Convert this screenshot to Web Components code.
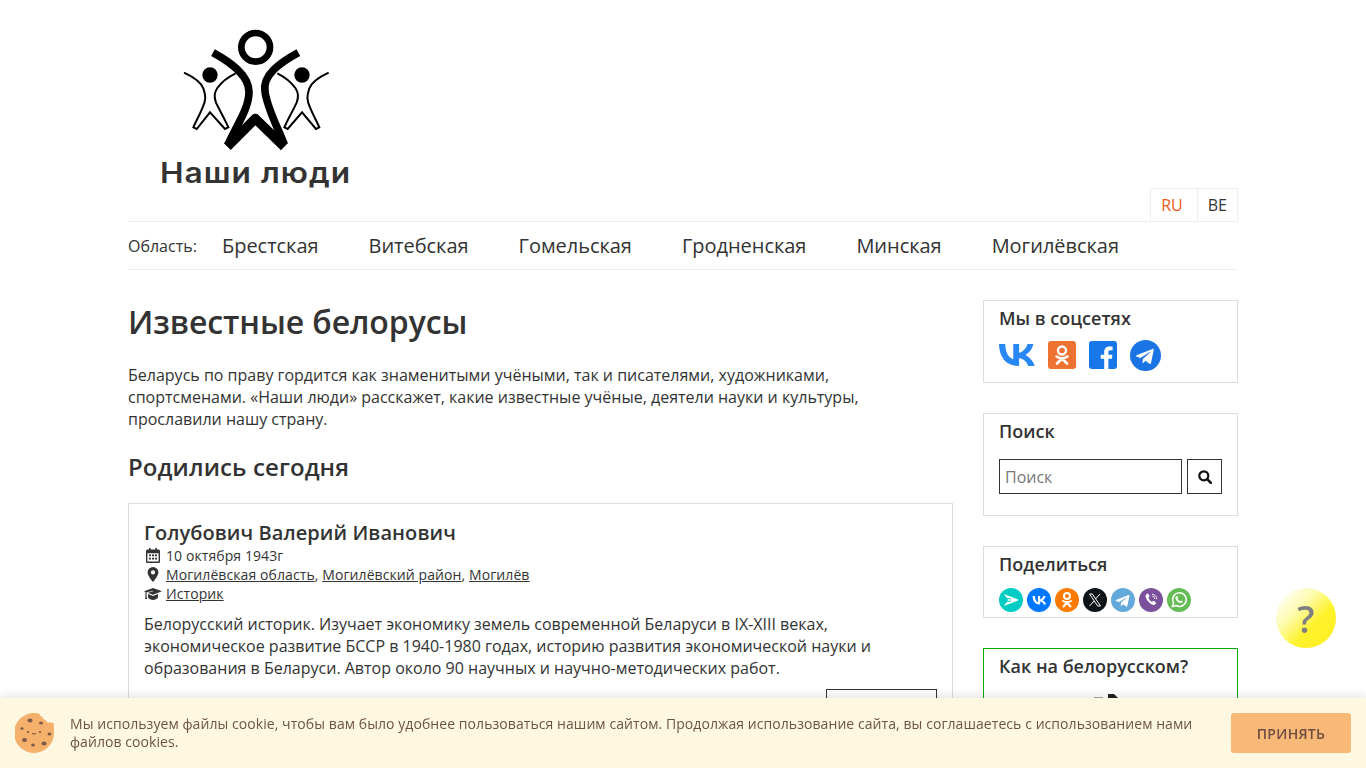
<!DOCTYPE html>
<html lang="ru">
<head>
<meta charset="utf-8">
<title>Наши люди</title>
<style>
  html, body { margin: 0; height: 768px; overflow: hidden; background: #fff; }
  body { font-family: "Open Sans", "Noto Sans", sans-serif; color: #333; font-size: 16px; }
  .page { width: 1110px; margin: 0 auto; }
  .columns { display: flex; justify-content: space-between; padding-top: 30px; }
</style>
</head>
<body>
<div class="page">
  <site-header></site-header>
  <region-nav></region-nav>
  <div class="columns">
    <main-column>
      <person-card name="Голубович Валерий Иванович" date="10 октября 1943г" job="Историк">
        Белорусский историк. Изучает экономику земель современной Беларуси в IX-XIII веках, экономическое развитие БССР в 1940-1980 годах, историю развития экономической науки и образования в Беларуси. Автор около 90 научных и научно-методических работ.
      </person-card>
    </main-column>
    <side-column></side-column>
  </div>
</div>
<help-bubble></help-bubble>
<cookie-bar></cookie-bar>

<script>
// маленькие иконки, все в одном месте
const ICONS = {
  calendar: '<svg viewBox="0 0 14 15" width="14" height="15"><path fill="#333" d="M3 0h1.600v1.600h4.800V0H11v1.600h1.400c.9 0 1.600.7 1.600 1.600v10.200c0 .9-.7 1.600-1.600 1.600H1.600C.7 15 0 14.300 0 13.400V3.200c0-.9.7-1.600 1.600-1.600H3zM1.400 5.200v8c0 .2.100.4.400.4h10.400c.3 0 .4-.2.400-.4v-8z"/><path fill="#333" d="M3 6.500h2v1.800H3zM6 6.500h2v1.800H6zM9 6.500h2v1.800H9zM3 9.800h2v1.800H3zM6 9.800h2v1.800H6zM9 9.800h2v1.800H9z"/></svg>',
  marker: '<svg viewBox="0 0 12 15" width="12" height="15"><path fill="#333" fill-rule="evenodd" d="M6 0a5.400 5.400 0 0 1 5.400 5.400C11.400 8.500 7.500 13 6 15 4.500 13 .6 8.500.6 5.400A5.400 5.400 0 0 1 6 0zm0 3.300a2.100 2.100 0 1 0 0 4.200 2.100 2.100 0 0 0 0-4.200z"/></svg>',
  cap: '<svg viewBox="0 0 18 12" width="18" height="12"><path fill="#333" d="M9 0l9 3.300L9 6.700 3.600 4.700 9 3.600l-.2-.7-6.200 1.300v4.300l.5 2.600H.9l.6-2.600V3.900L0 3.300z"/><path fill="#333" d="M4 6l5 1.900L14 6v3.500C13 11 11 12 9 12s-4-1-5-2.500z"/></svg>',
  search: '<svg viewBox="0 0 14 14" width="14" height="14"><circle cx="5.800" cy="5.800" r="4.500" fill="none" stroke="#111" stroke-width="2.200"/><path d="M9.200 9.200l3.600 3.600" stroke="#111" stroke-width="2.600" stroke-linecap="round"/></svg>'
};

function define(name, html) {
  customElements.define(name, class extends HTMLElement {
    constructor() {
      super();
      this.attachShadow({ mode: 'open' });
      this.shadowRoot.innerHTML = typeof html === 'function' ? html(this) : html;
    }
  });
}

define('site-logo', `
  <style>
    :host { display: block; width: 255px; height: 188px; position: relative; }
    svg { position: absolute; left: 42px; top: 20px; }
    .name {
      position: absolute; left: 0; right: 0; top: 150px; text-align: center;
      font: 600 28px/46px Inter, sans-serif; color: #333; letter-spacing: .9px;
      transform: scaleX(1.13);
    }
  </style>
  <svg width="170" height="135" viewBox="0 0 510 405">
    <circle cx="257" cy="82" r="43" fill="none" stroke="#000" stroke-width="20"/>
    <g fill="none" stroke="#000" stroke-width="23">
      <path d="M129 98C180 126 236 164 237 215C238 265 197 320 174 374"/>
      <path d="M385 98C334 126 276 164 285 215C292 265 322 320 343 374"/>
      <path d="M172 380L256 296L343 380" stroke-width="29" stroke-linejoin="round"/>
    </g>
    <g fill="none" stroke="#000" stroke-width="6">
      <circle cx="120" cy="165" r="23" fill="#000" stroke="none"/>
      <path d="M42 158C68 170 92 186 100 205C108 228 108 240 98 262C90 282 78 304 70 322L80 327L120 277L165 327L175 322C164 296 148 270 138 248C132 232 132 218 142 204C152 190 172 172 197 160"/>
    </g>
    <g fill="none" stroke="#000" stroke-width="6">
      <circle cx="396" cy="165" r="23" fill="#000" stroke="none"/>
      <path d="M476 158C450 170 426 186 418 205C410 228 410 240 420 262C428 282 440 304 448 322L438 327L396 277L353 327L343 322C354 296 370 270 380 248C386 232 386 218 376 204C366 190 346 172 322 160"/>
    </g>
  </svg>
  <div class="name">Наши люди</div>
`);

define('site-header', `
  <style>
    :host { display: flex; justify-content: space-between; align-items: flex-end; height: 221px; }
    .lang { display: flex; margin-bottom: -1px; }
    .lang span { padding: 0 10px; height: 32px; line-height: 32px; border: 1px solid #eee; font-size: 16px; }
    .lang span + span { border-left: 0; }
    .lang .on { color: #f0581a; padding-right: 14px; }
    site-logo { align-self: flex-start; }
  </style>
  <site-logo></site-logo>
  <div class="lang"><span class="on">RU</span><span>BE</span></div>
`);

define('region-nav', `
  <style>
    :host { display: flex; align-items: center; height: 47px; border-top: 1px solid #eee; border-bottom: 1px solid #eee; }
    .label { font-size: 16px; width: 94px; }
    a { font-size: 20px; color: #333; margin-right: 50px; text-decoration: none; letter-spacing: -.03px; }
  </style>
  <span class="label">Область:</span>
  <a>Брестская</a><a>Витебская</a><a>Гомельская</a><a>Гродненская</a><a>Минская</a><a>Могилёвская</a>
`);

define('main-column', `
  <style>
    :host { display: block; width: 825px; }
    h1 { font-size: 32px; font-weight: 600; line-height: 44px; margin: 0 0 20px; letter-spacing: -.1px; }
    p { margin: 0; width: 760px; line-height: 22px; }
    h2 { font-size: 24px; font-weight: 600; line-height: 32px; margin: 21px 0 20px; letter-spacing: .1px; }
  </style>
  <h1>Известные белорусы</h1>
  <p>Беларусь по праву гордится как знаменитыми учёными, так и писателями, художниками, спортсменами. «Наши люди» расскажет, какие известные учёные, деятели науки и культуры, прославили нашу страну.</p>
  <h2>Родились сегодня</h2>
  <slot></slot>
`);

define('person-card', el => `
  <style>
    :host { display: block; border: 1px solid #ddd; padding: 15px 15px 20px; height: 300px; }
    h3 { font-size: 20px; font-weight: 600; line-height: 27px; margin: 0; letter-spacing: .08px; }
    .row { display: flex; align-items: center; font-size: 14px; line-height: 19px; letter-spacing: .09px; }
    .ico { width: 18px; margin-right: 4px; display: flex; justify-content: center; }
    u { text-underline-offset: 1px; }
    p { margin: 10px 0 0; line-height: 22px; }
    .more { display: flex; justify-content: flex-end; margin-top: 10px; }
    button { width: 111px; height: 35px; background: #fff; border: 1px solid #333; padding: 0; }
  </style>
  <h3>${el.getAttribute('name')}</h3>
  <div class="row"><span class="ico">${ICONS.calendar}</span>${el.getAttribute('date')}</div>
  <div class="row"><span class="ico">${ICONS.marker}</span><u>Могилёвская область</u>,&nbsp;<u>Могилёвский район</u>,&nbsp;<u>Могилёв</u></div>
  <div class="row"><span class="ico">${ICONS.cap}</span><u>${el.getAttribute('job')}</u></div>
  <p><slot></slot></p>
  <div class="more"><button></button></div>
`);

define('side-box', el => `
  <style>
    :host { display: block; border: 1px solid ${el.getAttribute('color') || '#ddd'}; padding: 0 15px; height: ${el.getAttribute('h')}px; margin-bottom: 30px; }
    h4 { font-size: 18px; font-weight: 600; line-height: 24px; margin: 5px 0 0; }
  </style>
  <h4>${el.getAttribute('title')}</h4>
  <slot></slot>
`);

define('follow-icons', `
  <style>
    :host { display: flex; align-items: center; margin-top: 9px; height: 32px; }
    svg { display: block; }
  </style>
  <svg width="36" height="22" viewBox="0 0 36 22" style="margin-right:13px">
    <path fill="#2787f5" d="M19.600 22C7.300 22 .3 13.700 0 0h6.200c.2 10 4.600 14.300 8.100 15.200V0h5.800v8.700c3.500-.4 7.200-4.300 8.400-8.700h5.800c-1 5.400-5 9.400-7.900 11 2.900 1.300 7.400 4.800 9.200 11h-6.400c-1.400-4.200-4.700-7.400-9.100-7.800V22z"/>
  </svg>
  <svg width="28" height="28" viewBox="0 0 28 28" style="margin-right:13px">
    <rect width="28" height="28" rx="3" fill="#ee7230"/>
    <circle cx="14" cy="9.500" r="4" fill="none" stroke="#fff" stroke-width="2.400"/>
    <path d="M8.500 15.500c3.500 2.200 7.500 2.200 11 0M14 17.500l-5 5M14 17.500l5 5" fill="none" stroke="#fff" stroke-width="2.600" stroke-linecap="round"/>
  </svg>
  <svg width="28" height="28" viewBox="0 0 28 28" style="margin-right:13px">
    <rect width="28" height="28" rx="3" fill="#1877e8"/>
    <path fill="#fff" d="M15.200 28V17.800h-3.500v-4h3.500v-3c0-3.500 2.100-5.400 5.200-5.400 1.500 0 2.800.1 3.200.2v3.600h-2.200c-1.700 0-2 .8-2 2v2.600h4l-.5 4h-3.500V28z"/>
  </svg>
  <svg width="31" height="31" viewBox="0 0 31 31">
    <circle cx="15.500" cy="15.500" r="15.500" fill="#1b74e4"/>
    <path fill="#fff" d="M6.500 15.300l16-6.400c.8-.3 1.400.2 1.200 1.200L21 23c-.2.900-.8 1.100-1.500.7l-4-3-2 2c-.3.300-.5.400-1 .4l.3-4.100 7.500-6.800c.3-.3-.1-.4-.5-.2l-9.300 5.900-4-1.300c-.9-.2-.9-.8 0-1.300z"/>
  </svg>
`);

define('share-icons', `
  <style>
    :host { display: flex; gap: 4px; margin-top: 12px; }
    svg { display: block; }
  </style>
  <svg width="24" height="24" viewBox="0 0 24 24"><circle cx="12" cy="12" r="12" fill="#00ccc4"/><path fill="#fff" d="M5 6l15 6-15 6 4-6z"/><path d="M5 10l7 1M5 14l7-1" stroke="#00ccc4" stroke-width="1"/></svg>
  <svg width="24" height="24" viewBox="0 0 24 24"><circle cx="12" cy="12" r="12" fill="#07f"/><path fill="#fff" d="M12.800 16.500c-4.500 0-7-3-7.200-8.500h2.300c.1 4 1.800 5.600 3.100 6V8h2.200v3.400c1.300-.1 2.700-1.600 3.200-3.400h2.200c-.4 2.100-1.900 3.700-3 4.300 1.100.5 2.800 1.900 3.500 4.200h-2.400c-.5-1.600-1.800-2.900-3.500-3v3z"/></svg>
  <svg width="24" height="24" viewBox="0 0 24 24"><circle cx="12" cy="12" r="12" fill="#ff7a00"/><circle cx="12" cy="8" r="3" fill="none" stroke="#fff" stroke-width="1.900"/><path d="M8 13c2.500 1.500 5.500 1.500 8 0M12 14.500l-3.500 4M12 14.500l3.500 4" fill="none" stroke="#fff" stroke-width="2" stroke-linecap="round"/></svg>
  <svg width="24" height="24" viewBox="0 0 24 24"><circle cx="12" cy="12" r="12" fill="#0f1419"/><path d="M6.500 6h2.800l8.200 12h-2.800z" fill="none" stroke="#fff" stroke-width="1"/><path d="M17 6l-4.500 5M11 13l-4.500 5" stroke="#fff" stroke-width="1"/></svg>
  <svg width="24" height="24" viewBox="0 0 24 24"><circle cx="12" cy="12" r="12" fill="#64a9dc"/><path fill="#fff" d="M5 12l12.500-5c.6-.2 1.100.2.900 1l-2.100 10c-.1.700-.6.800-1.100.5l-3.100-2.300-1.500 1.500c-.2.200-.4.300-.8.300l.2-3.200 5.800-5.300c.2-.2 0-.3-.4-.1l-7.200 4.600-3-1c-.7-.2-.7-.6-.2-1z"/></svg>
  <svg width="24" height="24" viewBox="0 0 24 24"><circle cx="12" cy="12" r="12" fill="#7b519d"/><path fill="#fff" d="M8.200 5.500c.4-.2.800-.1 1 .2l1.300 2c.2.400.1.800-.2 1l-.8.700c.3 1.700 1.900 3.600 3.600 4.600l.8-.9c.3-.3.700-.3 1-.1l1.900 1.400c.3.300.4.700.1 1.100-.7 1-1.700 1.800-2.800 1.400-3.500-1.300-6.500-4.400-7.500-8-.3-1.200.6-2.700 1.600-3.400z"/><path d="M13 6.200c2.700.2 4.600 2.200 4.800 5M13.200 8.200c1.500.1 2.500 1.200 2.600 2.800" fill="none" stroke="#fff" stroke-width=".9"/></svg>
  <svg width="24" height="24" viewBox="0 0 24 24"><circle cx="12" cy="12" r="12" fill="#65bc54"/><path fill="none" stroke="#fff" stroke-width="1.500" d="M5.500 18.500l1-3.600a6.800 6.800 0 1 1 2.600 2.600z"/><path fill="#fff" d="M9.800 8c.4 0 .6.100.8.600l.5 1.200-.6.900c.5 1.100 1.400 2 2.700 2.600l.8-.9 1.400.7c.3.200.3.500.1 1-.4.800-1.300 1.100-2.100 1-2.300-.4-4.500-2.500-5-4.700-.1-1 .6-2.400 1.400-2.400z"/></svg>
`);

define('search-form', `
  <style>
    :host { display: flex; gap: 5px; margin-top: 16px; }
    input {
      width: 183px; height: 35px; box-sizing: border-box; border: 1px solid #333; padding: 0 5px;
      font: 16px "Open Sans", sans-serif; color: #333; outline: 0;
    }
    input::placeholder { color: #777; opacity: 1; }
    button { width: 35px; height: 35px; background: #fff; border: 1px solid #333; padding: 0; display: flex; align-items: center; justify-content: center; }
  </style>
  <input placeholder="Поиск"><button>${ICONS.search}</button>
`);

define('side-column', `
  <style>
    :host { display: block; width: 255px; }
    .word { display: block; margin: 16px 0 0 95px; }
  </style>
  <side-box title="Мы в соцсетях" h="81"><follow-icons></follow-icons></side-box>
  <side-box title="Поиск" h="101"><search-form></search-form></side-box>
  <side-box title="Поделиться" h="70"><share-icons></share-icons></side-box>
  <side-box title="Как на белорусском?" h="200" color="#0aab0a">
    <svg class="word" width="30" height="12" viewBox="0 0 30 12"><rect y="3" width="9" height="8" fill="#aaa"/><path d="M14 0h6l4 4v8H14z" fill="#222"/></svg>
  </side-box>
`);

define('help-bubble', `
  <style>
    :host {
      position: fixed; left: 1276px; top: 588px; width: 60px; height: 60px; border-radius: 50%;
      background: linear-gradient(135deg, #fffff5 10%, #fffbb0 36%, #fff22c 62%, #ffee20 100%);
      display: flex; align-items: center; justify-content: center;
      font: 600 38px/60px "Open Sans", sans-serif; color: #808080;
    }
  </style>
  ?
`);

define('cookie-bar', `
  <style>
    :host {
      position: fixed; left: 0; right: 0; bottom: 0; height: 70px; background: #fff8e1;
      box-shadow: 0 -2px 10px rgba(0,0,0,.12); display: flex; align-items: center; padding: 0 15px; box-sizing: border-box;
      color: #6d5442; font-size: 14px; line-height: 18px; letter-spacing: .07px;
    }
    svg { flex: none; margin-right: 15px; }
    .text { flex: 1; padding-right: 30px; }
    button {
      flex: none; width: 120px; height: 40px; border: 0; border-radius: 3px; background: #f8b878; color: #6d4c41;
      font: 600 14px "Open Sans", sans-serif; letter-spacing: .3px; padding: 0;
    }
  </style>
  <svg width="40" height="40" viewBox="0 0 40 40">
    <path fill="#f5b06c" d="M20 0c2 0 3 .3 4.500.8.200 2 1.500 3 3 3 0 2 1.500 3.200 3 3 .5 2 2 3 4 2.700 1.500-.2 2.500 0 4 .5.400 3 .5 6 .5 10a20 20 0 1 1-19-20z"/>
    <ellipse cx="15" cy="7.500" rx="2.600" ry="2" fill="#7a5a48"/>
    <ellipse cx="26" cy="10" rx="2" ry="1.500" fill="#7a5a48"/>
    <ellipse cx="7" cy="15.500" rx="1.600" ry="1.300" fill="#7a5a48"/>
    <ellipse cx="34.500" cy="21" rx="2" ry="1.500" fill="#7a5a48"/>
    <ellipse cx="9.500" cy="27" rx="2.500" ry="2" fill="#7a5a48"/>
    <ellipse cx="18" cy="32" rx="1.800" ry="1.500" fill="#7a5a48"/>
    <ellipse cx="29" cy="30.500" rx="2.500" ry="2" fill="#7a5a48"/>
    <circle cx="13" cy="19" r=".9" fill="#5d4037"/><circle cx="25" cy="19" r=".9" fill="#5d4037"/>
    <path d="M17 20c1 1.500 3 1.500 4 0" fill="none" stroke="#5d4037" stroke-width=".9"/>
  </svg>
  <div class="text">Мы используем файлы cookie, чтобы вам было удобнее пользоваться нашим сайтом. Продолжая использование сайта, вы соглашаетесь с использованием нами файлов cookies.</div>
  <button>ПРИНЯТЬ</button>
`);
</script>
</body>
</html>
